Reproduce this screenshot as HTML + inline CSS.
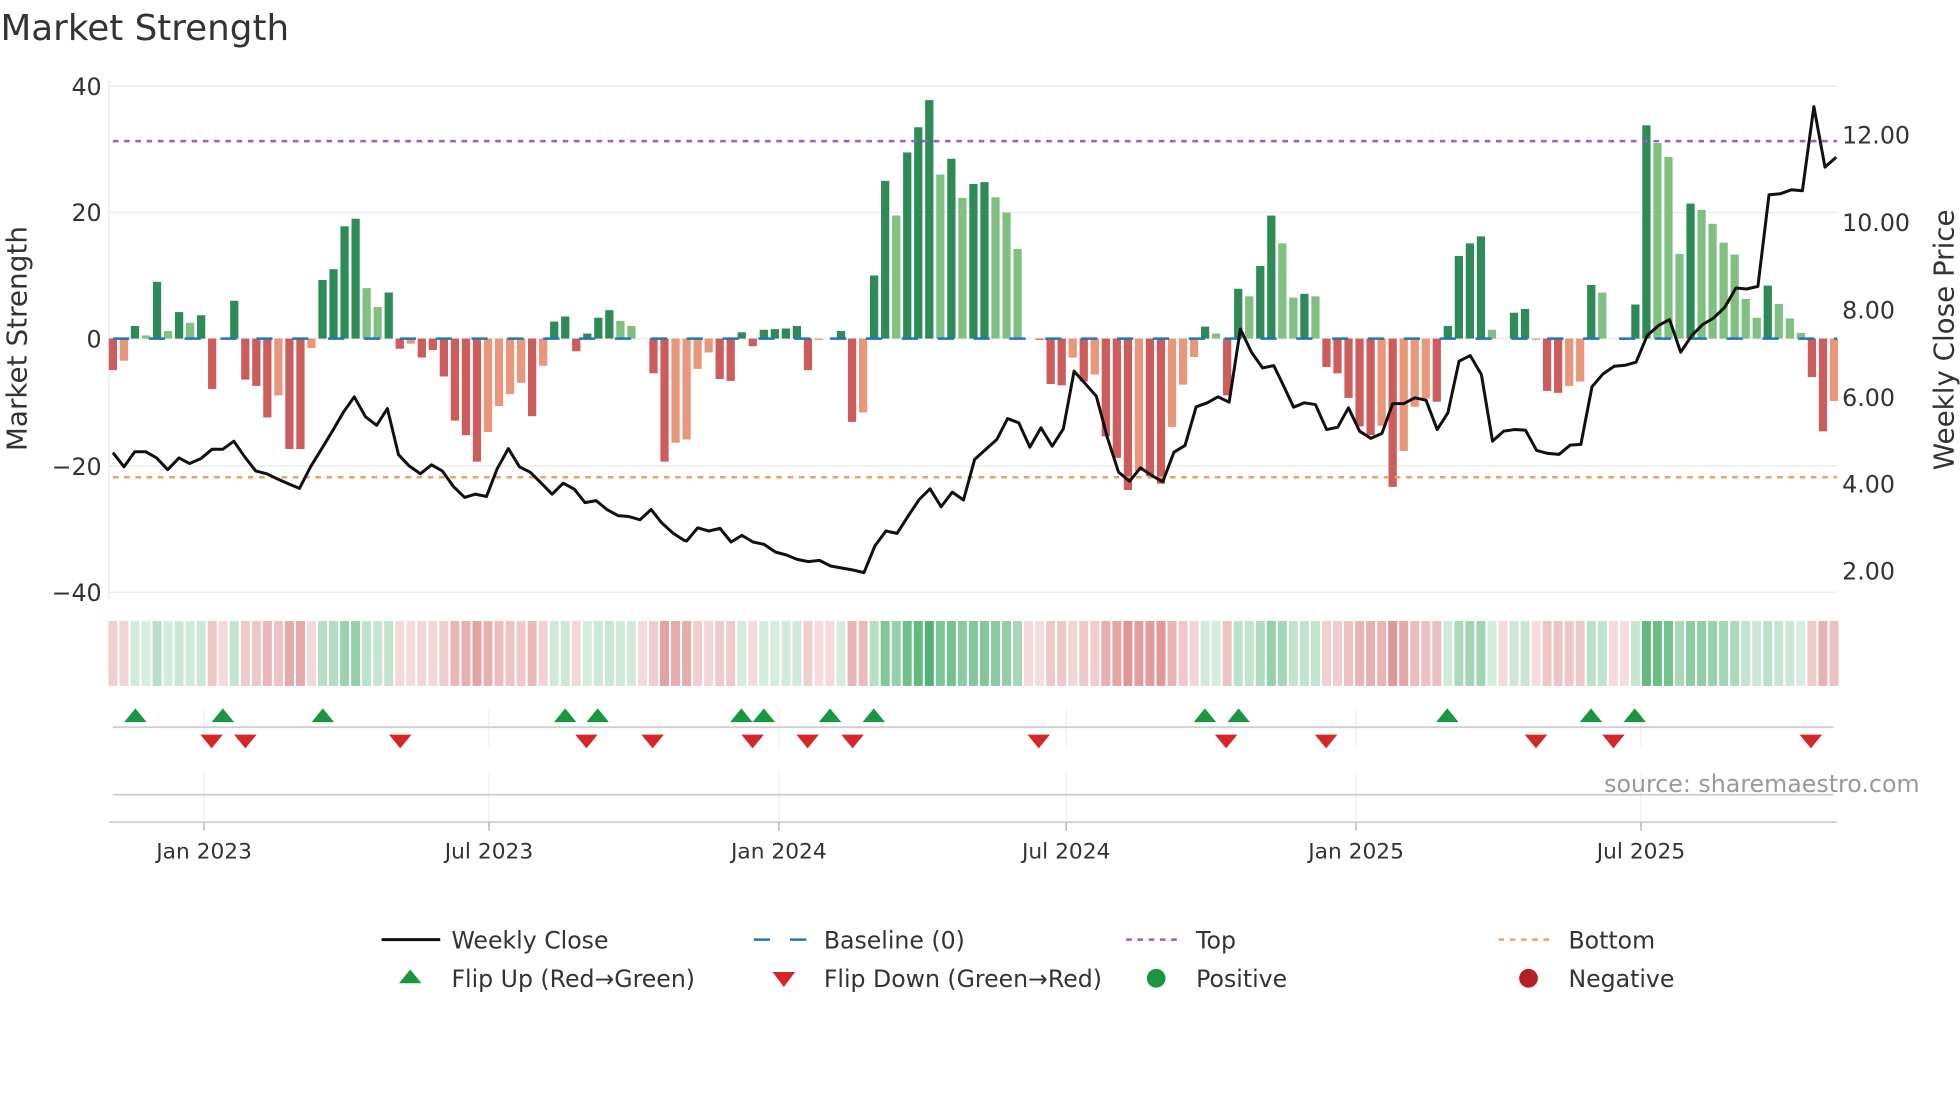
<!DOCTYPE html>
<html><head><meta charset="utf-8">
<style>
html,body{margin:0;padding:0;background:#fff;}
svg{display:block;}
text{font-family:"DejaVu Sans","Liberation Sans",sans-serif;fill:#333;}
</style></head>
<body>
<svg id="s" width="1960" height="1102" viewBox="0 0 1568 882" xmlns="http://www.w3.org/2000/svg">
<rect width="1568" height="882" fill="#fff"/>
<text x="0" y="32" font-size="28.6">Market Strength</text>
<g stroke="#ebebf0" stroke-width="1.2">
<line x1="87" y1="69" x2="1470" y2="69"/>
<line x1="87" y1="170" x2="1470" y2="170"/>
<line x1="87" y1="271" x2="1470" y2="271"/>
<line x1="87" y1="373" x2="1470" y2="373"/>
<line x1="87" y1="474" x2="1470" y2="474"/>
<line x1="87" y1="64" x2="87" y2="480"/>
</g>
<g font-size="19" text-anchor="end">
<text x="81" y="76">40</text>
<text x="81" y="177">20</text>
<text x="81" y="278">0</text>
<text x="81" y="380">−20</text>
<text x="81" y="481">−40</text>
</g>
<g font-size="19">
<text x="1474" y="115">12.00</text>
<text x="1474" y="185">10.00</text>
<text x="1474" y="255">8.00</text>
<text x="1474" y="325">6.00</text>
<text x="1474" y="394">4.00</text>
<text x="1474" y="464">2.00</text>
</g>
<text transform="translate(21,271) rotate(-90)" font-size="22.3" text-anchor="middle">Market Strength</text>
<text transform="translate(1563,272) rotate(-90)" font-size="22.2" text-anchor="middle">Weekly Close Price</text>
<g id="bars"></g>
<line x1="90" y1="271" x2="1470" y2="271" stroke="#1f77b4" stroke-width="2" stroke-dasharray="13 15.7"/>
<line x1="90" y1="113" x2="1470" y2="113" stroke="#9b59d6" stroke-width="2" stroke-dasharray="4.5 4.5"/>
<line x1="90" y1="382" x2="1470" y2="382" stroke="#f0a060" stroke-width="2" stroke-dasharray="4.5 4.5"/>
<polyline id="price" fill="none" stroke="#111" stroke-width="2.4" stroke-linejoin="round"/>
<g id="heat"></g>
<g stroke="#eceef2" stroke-width="1">
<line x1="163" y1="567" x2="163" y2="598"/><line x1="391" y1="567" x2="391" y2="598"/><line x1="623" y1="567" x2="623" y2="598"/><line x1="853" y1="567" x2="853" y2="598"/><line x1="1085" y1="567" x2="1085" y2="598"/><line x1="1313" y1="567" x2="1313" y2="598"/>
<line x1="163" y1="618" x2="163" y2="658"/><line x1="391" y1="618" x2="391" y2="658"/><line x1="623" y1="618" x2="623" y2="658"/><line x1="853" y1="618" x2="853" y2="658"/><line x1="1085" y1="618" x2="1085" y2="658"/><line x1="1313" y1="618" x2="1313" y2="658"/>
</g>
<line x1="90" y1="582" x2="1467" y2="582" stroke="#cfcfcf" stroke-width="1.5"/>
<line x1="90" y1="636" x2="1467" y2="636" stroke="#cfcfcf" stroke-width="1.5"/>
<line x1="87" y1="658" x2="1470" y2="658" stroke="#cfcfcf" stroke-width="1.5"/>
<g stroke="#bbb" stroke-width="1.2">
<line x1="163" y1="658" x2="163" y2="665"/><line x1="391" y1="658" x2="391" y2="665"/><line x1="623" y1="658" x2="623" y2="665"/><line x1="853" y1="658" x2="853" y2="665"/><line x1="1085" y1="658" x2="1085" y2="665"/><line x1="1313" y1="658" x2="1313" y2="665"/>
</g>
<g id="marks"></g>
<g font-size="17.4" text-anchor="middle">
<text x="163" y="687">Jan 2023</text>
<text x="391" y="687">Jul 2023</text>
<text x="623" y="687">Jan 2024</text>
<text x="853" y="687">Jul 2024</text>
<text x="1085" y="687">Jan 2025</text>
<text x="1313" y="687">Jul 2025</text>
</g>
<text x="1536" y="634" font-size="19" text-anchor="end" style="fill:#999">source: sharemaestro.com</text>
<line x1="305" y1="752" x2="352" y2="752" stroke="#111" stroke-width="2.4"/>
<line x1="603" y1="752" x2="645" y2="752" stroke="#1f77b4" stroke-width="2" stroke-dasharray="13 16"/>
<line x1="901" y1="752" x2="945" y2="752" stroke="#9b59d6" stroke-width="2" stroke-dasharray="4.5 4.5"/>
<line x1="1199" y1="752" x2="1243" y2="752" stroke="#f0a060" stroke-width="2" stroke-dasharray="4.5 4.5"/>
<polygon points="319,787 337,787 328,776" fill="#1a9641"/>
<polygon points="618,778 636,778 627,790" fill="#d62728"/>
<circle cx="925" cy="783" r="7.5" fill="#1a9641"/>
<circle cx="1223" cy="783" r="7.5" fill="#b22222"/>
<g font-size="18.9">
<text x="361" y="759">Weekly Close</text>
<text x="659" y="759">Baseline (0)</text>
<text x="957" y="759">Top</text>
<text x="1255" y="759">Bottom</text>
<text x="361" y="790">Flip Up (Red→Green)</text>
<text x="659" y="790">Flip Down (Green→Red)</text>
<text x="957" y="790">Positive</text>
<text x="1255" y="790">Negative</text>
</g>
</svg>
<script>
(function(){
var NS="http://www.w3.org/2000/svg";
var data=("-5r -3.5s 2g 0.5l 9g 1.2l 4.2g 2.5l 3.7g -8r 0z 6g -6.5r -7.5r -12.5r -9s -17.5r -17.5r -1.5s 9.3g 11g 17.8g 19g 8l 5l 7.3g -1.6r -0.8s -3r -1.8r -6r -13r -15.3r -19.5r -14.8s -10.7s -8.8s -7s -12.3r -4.3s 2.7g 3.5g -2r 0.8g 3.3g 4.5g 2.8l 2l 0z -5.5r -19.5r -16.5s -16s "+
"-4.8s -2.2s -6.4r -6.7r 1g -1.2r 1.4g 1.5g 1.6g 2g -5r -0.2s 0z 1.2g -13.2r -11.7s 10g 25g 19.5l 29.5g 33.5g 37.8g 26l 28.5g 22.3l 24.5g 24.8g 22.4l 20l 14.2l 0z -0.2r -7.2r -7.4r -3s -6.8r -5.7s -15.5r -18.9r -24r -21s -21.8r -23r -14s -7.3s -2.9s 1.9g 0.8l -9r 7.9g 6.7l 11.5g 19.5g "+
"15.1l 6.5l 7.1g 6.7l -4.5r -5.5r -9.4r -13.9r -15.3r -13.8s -23.5r -17.8s -10.8s -9.5s -10r 2g 13.1g 15.1g 16.2g 1.4l 0z 4.1g 4.7g -0.2s -8.3r -8.6r -7.5s -6.8s 8.5g 7.3l 0z -0.2r 5.4g 33.8g 31l 28.8l 13.4l 21.4g 20.4l 18.2l 15.2l 13.3l 6.3l 3.3l 8.4g 5.5l 3.2l 0.9l -6.1r -14.7r -9.9s").split(" ");
var col={r:"#cd5c5c",s:"#e9967a",g:"#2e8b57",l:"#80c080",z:"#fff"};
var bars=document.getElementById("bars"),heat=document.getElementById("heat");
var step=8.83,x0=90,k=5.05;
data.forEach(function(d,i){
 var t=d.slice(-1),v=parseFloat(d);var cx=x0+i*step;
 if(v!==0){var r=document.createElementNS(NS,"rect");
  var h=Math.abs(v)*k;r.setAttribute("x",cx-3.3);r.setAttribute("width",6.6);
  r.setAttribute("y",v>0?271-h:271);r.setAttribute("height",h);r.setAttribute("fill",col[t]);bars.appendChild(r);}
 var a=Math.min(1,0.18+0.62*Math.abs(v)/38);
 var base=v>=0?[40,160,80]:[200,70,70];
 if(v===0){base=[200,70,70];a=0.2;}
 var c=base.map(function(b){return Math.round(255-(255-b)*a);});
 var h2=document.createElementNS(NS,"rect");
 h2.setAttribute("x",cx-3.6);h2.setAttribute("width",7.2);h2.setAttribute("y",497);h2.setAttribute("height",52);
 h2.setAttribute("fill","rgb("+c.join(",")+")");heat.appendChild(h2);
});
var z1=[[252,965],[277,1000],[301,963],[326,963],[350,978],[375,1007],[400,978],[424,992],[449,980],[474,957],[498,957],[523,937],[547,975],[572,1010],[597,1017],[621,1030],[646,1042],[670,1053],[695,1000],[720,955],[744,912],[769,865],[793,828],[818,877],[843,898],[867,857],[892,970],[916,998],[941,1017],[966,995],[990,1010],[1015,1048],[1040,1075],[1064,1067],[1089,1073],[1113,1005],[1138,955],[1163,1000],[1187,1013],[1212,1040],[1236,1067],[1261,1040],[1286,1055],[1310,1088],[1335,1083],[1359,1105],[1384,1120],[1408,1122],[1433,1130],[1458,1105],[1482,1138],[1507,1163],[1531,1180]];
var z3=[[17,1385],[46,1345],[75,1355],[104,1347],[133,1388],[161,1368],[190,1388],[219,1395],[248,1418],[277,1427],[305,1440],[334,1447],[363,1443],[392,1460],[421,1466],[450,1472],[479,1480],[507,1400],[536,1355],[565,1362],[594,1310],[623,1260],[651,1228],[680,1282],[709,1238],[738,1262],[767,1140],[796,1110],[825,1080],[853,1017],[882,1030],[911,1103],[940,1045],[969,1100],[998,1048],[1026,875],[1055,912],[1084,950],[1113,1075],[1142,1178],[1171,1205],[1199,1165],[1228,1188],[1257,1207],[1286,1118],[1315,1098],[1344,982],[1373,970],[1401,952],[1430,968],[1459,748],[1488,818],[1517,865],[1546,858]];
var z4=[[34,912],[63,983],[91,970],[120,975],[149,1050],[178,1043],[206,985],[235,1055],[264,1077],[293,1062],[321,972],[350,972],[379,955],[408,962],[437,1050],[465,1000],[494,845],[523,828],[552,885],[581,1085],[610,1055],[638,1050],[667,1052],[696,1113],[725,1122],[754,1125],[783,1097],[811,1095],[840,922],[869,883],[898,860],[927,857],[955,848],[984,768],[1013,738],[1042,720],[1071,818],[1100,768],[1128,735],[1157,715],[1186,683],[1215,625],[1243,628],[1272,620],[1301,345],[1330,342],[1359,330],[1388,333],[1418,80],[1447,262],[1476,232]];
var pts=[];
z1.forEach(function(p){var idx=(p[0]-252)/24.72;pts.push([x0+idx*step,271-(685-p[1])/15.5*k]);});
z3.forEach(function(p){var idx=52+(p[0]-17)/28.73;pts.push([x0+idx*step,271-(777-p[1])/18.95*k]);});
z4.forEach(function(p){var idx=105+(p[0]-5)/28.73;pts.push([x0+idx*step,271-(777-p[1])/18.95*k]);});
document.getElementById("price").setAttribute("points",pts.map(function(p){return p[0].toFixed(1)+","+p[1].toFixed(1);}).join(" "));
var marks=document.getElementById("marks");
[108,178,258,452,478,593,611,664,699,964,991,1158,1273,1308].forEach(function(x){
 var p=document.createElementNS(NS,"polygon");p.setAttribute("points",(x-9)+",578 "+(x+9)+",578 "+x+",567");p.setAttribute("fill","#1a9641");marks.appendChild(p);});
[169,196,320,469,522,602,646,682,831,981,1061,1229,1291,1449].forEach(function(x){
 var p=document.createElementNS(NS,"polygon");p.setAttribute("points",(x-9)+",588 "+(x+9)+",588 "+x+",599");p.setAttribute("fill","#d62728");marks.appendChild(p);});
})();
</script>
</body></html>
